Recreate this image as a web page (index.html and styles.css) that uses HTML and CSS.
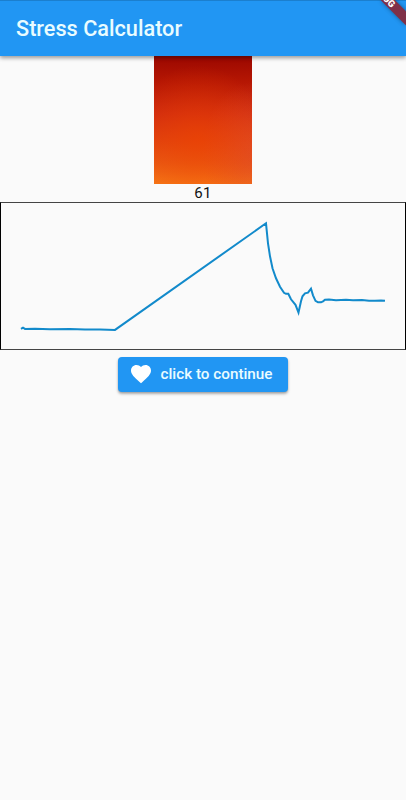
FILE: index.html
```html
<!DOCTYPE html>
<html lang="en">
<head>
<meta charset="utf-8">
<title>Stress Calculator</title>
<link rel="stylesheet" href="styles.css">
</head>
<body>
<header class="app-bar">
  <h1 class="title">Stress Calculator</h1>
  <svg class="ribbon" width="36" height="36" viewBox="0 0 36 36" aria-hidden="true">
    <path class="ribbon-band" d="M10.500 0H24.800L36 11.200V25.500Z"/>
    <text class="ribbon-text" transform="translate(21.400 8) rotate(45)" text-anchor="end">UG</text>
  </svg>
</header>
<main class="content">
  <div class="swatch"></div>
  <div class="score">61</div>
  <div class="chart">
    <svg class="plot" width="404" height="146" viewBox="1 202.7 404 146">
      <path class="line" d="M21 328.6L23 327.4L25 328.6L35 328.5L50 328.9L70 328.7L85 329.2L100 329.1L115 329.6L266 223L268 243L270 256L272.500 268L276 278L280 286.500L284 292.500L286 293.500H288.300L291 299L295.500 304.500L298.500 312.200L301 301L302.500 296L305 293L308 292.300L311 288.300L313 295L315.500 300.500L318 302L321 302L323 301L325 299.400L329 299.200L336 299.900L346 299.400L353 300L362 299.600L369 300.400L375 300.500L381 300.100L385 300.500"/>
    </svg>
  </div>
  <button class="button">
    <svg class="heart" width="24" height="24" viewBox="0 0 24 24" aria-hidden="true"><path d="M12 21.350l-1.450-1.320C5.400 15.360 2 12.280 2 8.500 2 5.420 4.420 3 7.500 3c1.740 0 3.410.810 4.500 2.090C13.090 3.810 14.760 3 16.500 3 19.580 3 22 5.420 22 8.500c0 3.780-3.400 6.860-8.550 11.540L12 21.350z"/></svg>
    <span>click to continue</span>
  </button>
</main>
</body>
</html>
```
FILE: styles.css
```css
* { box-sizing: border-box; }
body {
  margin: 0;
  min-height: 100vh;
  background: #fafafa;
  font-family: Roboto, sans-serif;
  overflow: hidden;
}
.app-bar {
  position: relative;
  z-index: 1;
  display: flex;
  align-items: center;
  height: 56px;
  padding: 0 16px;
  background: #2196f3;
  border-top: 1px solid #1b7fce;
  box-shadow: 0 2px 4px rgba(0, 0, 0, .3), 0 1px 5px rgba(0, 0, 0, .15);
}
.title {
  margin: 0;
  color: #e9fcff;
  font-size: 21.7px;
  font-weight: 500;
  line-height: 28px;
  white-space: nowrap;
}
.ribbon {
  position: absolute;
  top: -1px;
  right: 0;
}
.ribbon-band {
  fill: #7f3048;
  filter: drop-shadow(0 0 2px rgba(0, 0, 0, .4));
}
.ribbon-text {
  fill: #fff;
  font-size: 9.5px;
  font-weight: 900;
}
.content {
  display: flex;
  flex-direction: column;
  align-items: center;
}
.swatch {
  width: 98px;
  height: 128px;
  background:
    radial-gradient(ellipse 70px 75px at 45% 66%, rgba(239, 67, 0, .6), rgba(239, 67, 0, 0)),
    radial-gradient(ellipse 50px 70px at 100% 75%, rgba(224, 75, 40, .7), rgba(224, 75, 40, 0)),
    linear-gradient(#9b0800 0%, #b51603 20%, #cf2b10 45%, #df4210 66%, #e95b14 84%, #f67817 100%);
}
.score {
  height: 18px;
  color: #111;
  font-size: 15px;
  letter-spacing: .3px;
  line-height: 19px;
}
.chart {
  width: 100%;
  height: 148px;
  border: 1px solid #000;
  border-top-color: #444;
  border-bottom-color: #444;
}
.plot { display: block; }
.line {
  fill: none;
  stroke: #128acb;
  stroke-width: 2;
  stroke-linejoin: miter;
}
.button {
  display: flex;
  align-items: center;
  gap: 7.5px;
  width: 170px;
  height: 35px;
  margin-top: 7px;
  padding: 0 11px 2px;
  border: 0;
  border-radius: 4px;
  background: #2196f3;
  box-shadow: 0 2px 3px rgba(0, 0, 0, .28), 0 1px 2px rgba(0, 0, 0, .12);
  color: #e9fcff;
  font: 500 15.25px/20px Roboto, sans-serif;
  white-space: nowrap;
}
.heart { fill: #fff; flex: none; }
```
